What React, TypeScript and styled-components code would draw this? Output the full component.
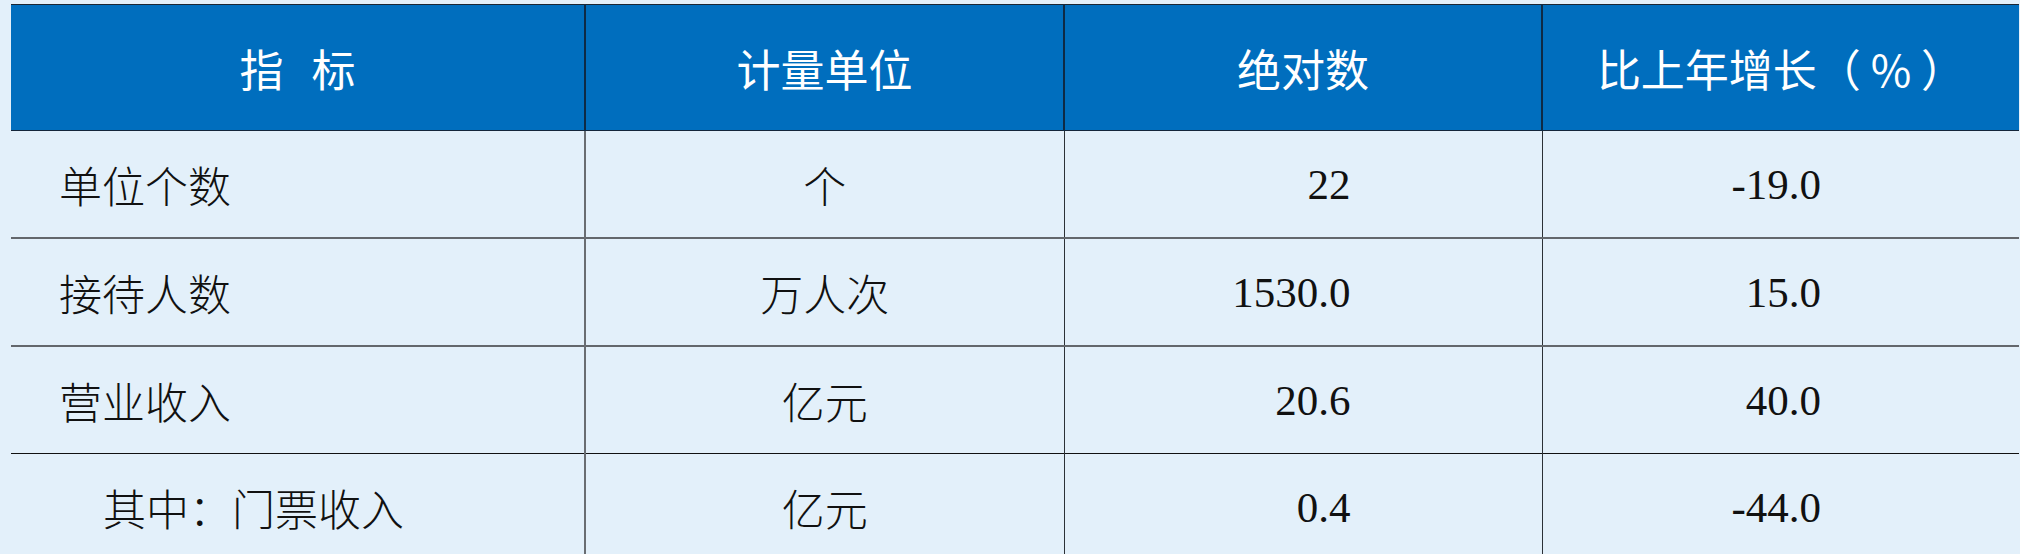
import React from 'react';
import styled, { createGlobalStyle } from 'styled-components';

const GlobalStyle = createGlobalStyle`
  html, body {
    margin: 0;
    padding: 0;
    background: #e3f0fa;
  }
`;

const Page = styled.div`
  width: 2020px;
  height: 554px;
  overflow: hidden;
  background: #e3f0fa;
  padding: 4px 1px 0 11px;
  box-sizing: border-box;
`;

const Table = styled.table`
  width: 2008px;
  border-collapse: collapse;
  table-layout: fixed;
  border-top: 1px solid #9aa7b3;
`;

const HeadCell = styled.th<{ $gap?: number }>`
  height: 125px;
  padding: 0;
  background: #006ebe;
  color: #ffffff;
  font-family: 'Noto Sans CJK SC', 'Noto Sans', sans-serif;
  font-weight: 400;
  font-size: 44px;
  word-spacing: ${(p) => (p.$gap ? `${p.$gap}px` : 'normal')};
  white-space: pre;
  text-align: center;
  vertical-align: middle;
  border-top: 1px solid #1a2633;
  border-bottom: 1px solid #14263a;
  border-left: 2px solid #0e2a45;
  &:first-child {
    border-left: none;
  }
`;

type Align = 'left' | 'center' | 'right';

const Cell = styled.td<{ $align: Align; $pr?: number; $indent?: boolean; $num?: boolean }>`
  height: 106px;
  padding: 0;
  padding-left: ${(p) => (p.$align === 'left' ? (p.$indent ? '92px' : '48px') : '0')};
  padding-right: ${(p) => (p.$pr ? `${p.$pr}px` : '0')};
  text-align: ${(p) => p.$align};
  vertical-align: middle;
  color: #111111;
  font-family: ${(p) =>
    p.$num
      ? "'Liberation Serif', 'Times New Roman', serif"
      : "'Liberation Serif', 'Noto Sans CJK SC', serif"};
  font-weight: ${(p) => (p.$num ? 400 : 300)};
  font-size: 43px;
  border-left: 1px solid #2c3136;
  &:first-child {
    border-left: none;
  }
  &:nth-child(2) {
    border-left: 2px solid #696d72;
  }
`;

const Row = styled.tr<{ $last?: boolean }>`
  border-bottom: ${(p) => (p.$last ? '1px solid #111111' : '2px solid #63676c')};
`;

interface Item {
  name: string;
  unit: string;
  value: string;
  growth: string;
  sub?: boolean;
}

const rows: Item[] = [
  { name: '单位个数', unit: '个', value: '22', growth: '-19.0' },
  { name: '接待人数', unit: '万人次', value: '1530.0', growth: '15.0' },
  { name: '营业收入', unit: '亿元', value: '20.6', growth: '40.0' },
  { name: '其中：门票收入', unit: '亿元', value: '0.4', growth: '-44.0', sub: true },
];

const App: React.FC = () => {
  const renderRows = (): JSX.Element[] => {
    return rows.map((r, i) => {
      return (
        <Row key={r.name} $last={i === 2}>
          <Cell $align="left" $indent={r.sub}>
            {r.name}
          </Cell>
          <Cell $align="center">{r.unit}</Cell>
          <Cell $align="right" $pr={191} $num>
            {r.value}
          </Cell>
          <Cell $align="right" $pr={198} $num>
            {r.growth}
          </Cell>
        </Row>
      );
    });
  };

  return (
    <Page>
      <GlobalStyle />
      <Table>
        <colgroup>
          <col style={{ width: 574 }} />
          <col style={{ width: 479 }} />
          <col style={{ width: 478 }} />
          <col style={{ width: 477 }} />
        </colgroup>
        <thead>
          <tr>
            <HeadCell $gap={18}>指 标</HeadCell>
            <HeadCell>计量单位</HeadCell>
            <HeadCell>绝对数</HeadCell>
            <HeadCell>比上年增长（ % ）</HeadCell>
          </tr>
        </thead>
        <tbody>{renderRows()}</tbody>
      </Table>
    </Page>
  );
};

export default App;
